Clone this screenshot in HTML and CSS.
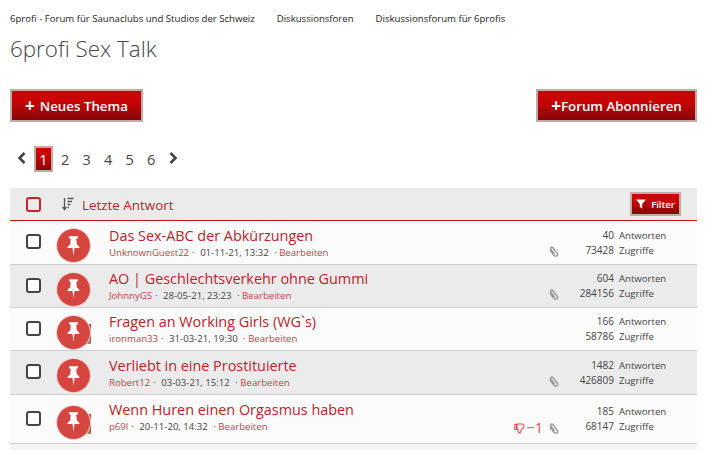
FILE: index.html
```html
<!DOCTYPE html>
<html lang="de">
<head>
    <meta charset="UTF-8">
    <title>6profi Sex Talk</title>
    <link rel="stylesheet" href="styles.css">
</head>
<body>
    <svg width="0" height="0" class="defs">
        <symbol id="pin" viewBox="0 0 20 26">
            <path d="M4 0h12v2.400l-2.300 1.200.7 7.400c2 1 3.400 2.600 3.800 4.600H11.400L10 26 8.600 15.600H1.800c.4-2 1.800-3.600 3.800-4.600l.7-7.400L4 2.400z"/>
        </symbol>
        <symbol id="clip" viewBox="0 0 12 12">
            <path d="M2 4.500l4.600 5.600c.9 1.100 2.300 1.200 3.100.5.900-.7.900-2 .1-3.100L5.300 1.900C4.700 1.200 3.800 1.100 3.200 1.600c-.6.500-.6 1.400-.1 2l4 5" fill="none" stroke="#999" stroke-width="1.600"/>
        </symbol>
    </svg>

    <div class="breadcrumb">
        <a>6profi - Forum für Saunaclubs und Studios der Schweiz</a>
        <a>Diskussionsforen</a>
        <a>Diskussionsforum für 6profis</a>
    </div>
    <h1>6profi Sex Talk</h1>

    <div class="actions">
        <a class="btn btn-new"><span class="plus">+</span> Neues Thema</a>
        <a class="btn btn-sub"><span class="plus">+</span>Forum Abonnieren</a>
    </div>

    <div class="pagination">
        <svg class="chevron" width="10" height="12" viewBox="0 0 10 12"><path d="M7.500 1L2.500 6l5 5" fill="none" stroke="#444" stroke-width="2.600"/></svg>
        <span class="page current">1</span>
        <span class="page">2</span>
        <span class="page">3</span>
        <span class="page">4</span>
        <span class="page">5</span>
        <span class="page">6</span>
        <svg class="chevron" width="10" height="12" viewBox="0 0 10 12"><path d="M2.500 1l5 5-5 5" fill="none" stroke="#444" stroke-width="2.600"/></svg>
    </div>

    <div class="list-head">
        <span class="check check-red"></span>
        <svg class="sort-icon" width="12" height="14" viewBox="0 0 12 14">
            <path d="M2.500 1v11M.6 9.800l1.900 2.700 1.900-2.700" fill="none" stroke="#555" stroke-width="1.300"/>
            <path d="M5.500 1.500h6M5.500 4.500h4.500M5.500 7.500h3M5.500 10.500h1.500" stroke="#555" stroke-width="1.300"/>
        </svg>
        <span class="sort-label">Letzte Antwort</span>
        <a class="btn btn-filter">
            <svg width="10" height="10" viewBox="0 0 10 10"><path d="M0 .5h10L6.200 5v4.500L3.800 8V5z" fill="#fff"/></svg>
            Filter
        </a>
    </div>

    <div class="row row-high">
        <span class="check"></span>
        <span class="pin"><svg width="15" height="24"><use href="#pin"/></svg></span>
        <div class="topic">
            <a class="title">Das Sex-ABC der Abkürzungen</a>
            <div class="meta"><a>UnknownGuest22</a> · <span>01-11-21, 13:32</span> · <a>Bearbeiten</a></div>
        </div>
        <div class="marks"><svg class="clip" width="11" height="11"><use href="#clip"/></svg></div>
        <div class="stats">
            <div><b>40</b><span>Antworten</span></div>
            <div><b>73428</b><span>Zugriffe</span></div>
        </div>
    </div>

    <div class="row alt">
        <span class="check"></span>
        <span class="pin"><svg width="15" height="24"><use href="#pin"/></svg></span>
        <div class="topic">
            <a class="title">AO | Geschlechtsverkehr ohne Gummi</a>
            <div class="meta"><a>JohnnyGS</a> · <span>28-05-21, 23:23</span> · <a>Bearbeiten</a></div>
        </div>
        <div class="marks"><svg class="clip" width="11" height="11"><use href="#clip"/></svg></div>
        <div class="stats">
            <div><b>604</b><span>Antworten</span></div>
            <div><b>284156</b><span>Zugriffe</span></div>
        </div>
    </div>

    <div class="row">
        <span class="check"></span>
        <span class="pin peek"><svg width="15" height="24"><use href="#pin"/></svg></span>
        <div class="topic">
            <a class="title">Fragen an Working Girls (WG`s)</a>
            <div class="meta"><a>ironman33</a> · <span>31-03-21, 19:30</span> · <a>Bearbeiten</a></div>
        </div>
        <div class="marks"></div>
        <div class="stats">
            <div><b>166</b><span>Antworten</span></div>
            <div><b>58786</b><span>Zugriffe</span></div>
        </div>
    </div>

    <div class="row row-high alt">
        <span class="check"></span>
        <span class="pin"><svg width="15" height="24"><use href="#pin"/></svg></span>
        <div class="topic">
            <a class="title">Verliebt in eine Prostituierte</a>
            <div class="meta"><a>Robert12</a> · <span>03-03-21, 15:12</span> · <a>Bearbeiten</a></div>
        </div>
        <div class="marks"><svg class="clip" width="11" height="11"><use href="#clip"/></svg></div>
        <div class="stats">
            <div><b>1482</b><span>Antworten</span></div>
            <div><b>426809</b><span>Zugriffe</span></div>
        </div>
    </div>

    <div class="row row-tall">
        <span class="check"></span>
        <span class="pin peek"><svg width="15" height="24"><use href="#pin"/></svg></span>
        <div class="topic">
            <a class="title">Wenn Huren einen Orgasmus haben</a>
            <div class="meta"><a>p69l</a> · <span>20-11-20, 14:32</span> · <a>Bearbeiten</a></div>
        </div>
        <div class="marks">
            <span class="rating">
                <svg width="11" height="11" viewBox="0 0 11 11"><path d="M3 1h5.500c1 0 1.500 1 1.500 2 0 1.500-1 2.500-2.500 3.500L6 10 4.500 9.500 4 6.500H3zM.8 1.500H2.500v5H.8z" fill="none" stroke="#f0474c" stroke-width="1.100"/></svg>
                −1
            </span>
            <svg class="clip" width="11" height="11"><use href="#clip"/></svg>
        </div>
        <div class="stats">
            <div><b>185</b><span>Antworten</span></div>
            <div><b>68147</b><span>Zugriffe</span></div>
        </div>
    </div>

    <div class="row-next"></div>
</body>
</html>
```

FILE: styles.css
```css
/* General Page Styles */
body {
    font-family: 'Open Sans', sans-serif;
    background-color: #fff;
    color: #444;
    margin: 0;
    padding: 0 14px 0 10px;
    height: 450px;
    overflow: hidden;
}

.defs {
    position: absolute;
}

a {
    color: inherit;
    text-decoration: none;
}

/* Header */
.breadcrumb {
    display: flex;
    gap: 22px;
    padding-top: 11px;
    font-size: 9.6px;
    line-height: 15px;
    color: #222;
}

h1 {
    margin: 7px 0 0;
    font-size: 22.400px;
    font-weight: 300;
    line-height: 32px;
    color: #444;
}

/* Buttons */
.btn {
    display: inline-flex;
    align-items: center;
    justify-content: center;
    box-sizing: border-box;
    color: #fff;
    font-weight: 600;
    background: linear-gradient(#c80404 35%, #860808);
    border: 2px solid #c4a9a9;
}

.actions {
    display: flex;
    justify-content: space-between;
    margin-top: 24px;
}

.actions .btn {
    height: 33px;
    font-size: 13.300px;
}

.btn-new {
    width: 133px;
    gap: 5px;
}

.btn-sub {
    width: 161px;
}

.plus {
    font-size: 17px;
    font-weight: 700;
    line-height: 1;
}

/* Pagination */
.pagination {
    display: flex;
    align-items: center;
    margin-top: 24px;
    height: 26px;
    padding-left: 7px;
    font-size: 14.500px;
    color: #444;
}

.chevron {
    margin-top: -3px;
}

.page {
    width: 21.500px;
    text-align: center;
}

.page.current {
    box-sizing: border-box;
    width: 19px;
    height: 26px;
    margin: 0 1.500px 0 7px;
    line-height: 24px;
    color: #fff;
    background: linear-gradient(#c80404 35%, #860808);
    border: 2px solid #c4a9a9;
}

.pagination .chevron:last-child {
    margin-left: 6px;
}

/* List */
.list-head {
    display: flex;
    align-items: center;
    box-sizing: border-box;
    height: 33px;
    margin-top: 16px;
    padding: 0 16px;
    background-color: #ebebeb;
    border-bottom: 1px solid #c8161f;
}

.check {
    flex: none;
    box-sizing: border-box;
    width: 15px;
    height: 15px;
    border: 2px solid #444;
    border-radius: 3px;
    background-color: #fff;
}

.row .check {
    margin-bottom: 2px;
}

.check-red {
    border-color: #c8232c;
    background: none;
}

.sort-icon {
    margin-left: 21px;
}

.sort-label {
    margin-left: 8px;
    padding-top: 1px;
    font-size: 13.400px;
    color: #b8232b;
}

.btn-filter {
    width: 51px;
    height: 24px;
    margin-left: auto;
    gap: 5px;
    font-size: 9.500px;
}

.row {
    display: flex;
    align-items: center;
    box-sizing: border-box;
    isolation: isolate;
    height: 43px;
    padding-left: 16px;
    background-color: #fbfbfb;
    border-bottom: 1px solid #cfcfcf;
}

.row.alt {
    background-color: #ebebeb;
}

.row-high {
    height: 44px;
}

.row-tall {
    height: 49px;
}

.row-tall .topic {
    margin-bottom: 5px;
}

.row-next {
    height: 10px;
    background-color: #f4f4f4;
}

.pin {
    position: relative;
    flex: none;
    display: flex;
    align-items: center;
    justify-content: center;
    width: 33px;
    height: 33px;
    margin-left: 16px;
    margin-top: 6px;
    border-radius: 50%;
    background-color: #d4463f;
    box-shadow: 0 0 0 1px #f3d6d4;
}

.pin svg {
    fill: #fff;
}

/* Avatar edge showing from behind the badge */
.peek::after {
    content: "";
    position: absolute;
    z-index: -1;
    right: -1px;
    top: 8px;
    width: 5px;
    height: 20px;
    background: linear-gradient(#c0392b 70%, #a89060);
}

.topic {
    flex: 1;
    min-width: 0;
    margin-left: 19px;
}

.title {
    display: block;
    font-size: 14.400px;
    line-height: 20px;
    color: #b8232b;
}

.meta {
    font-size: 9.600px;
    line-height: 14px;
    color: #444;
}

.meta a {
    color: #b8434a;
}

.meta a:first-child {
    margin-right: 0.500px;
}

.meta span {
    margin: 0 3px;
}

.marks {
    display: flex;
    align-items: center;
    gap: 5px;
    align-self: flex-end;
    padding-bottom: 7px;
    margin-right: 5px;
}

.rating {
    display: flex;
    align-items: center;
    gap: 1px;
    font-size: 14.500px;
    line-height: 16px;
    color: #f0474c;
}

.stats {
    width: 133px;
    flex: none;
    font-size: 9.600px;
    line-height: 15px;
    white-space: nowrap;
}

.stats div {
    display: flex;
    align-items: baseline;
    gap: 5px;
}

.stats b {
    flex: none;
    width: 50px;
    font-size: 10px;
    font-weight: 400;
    text-align: right;
}
```
